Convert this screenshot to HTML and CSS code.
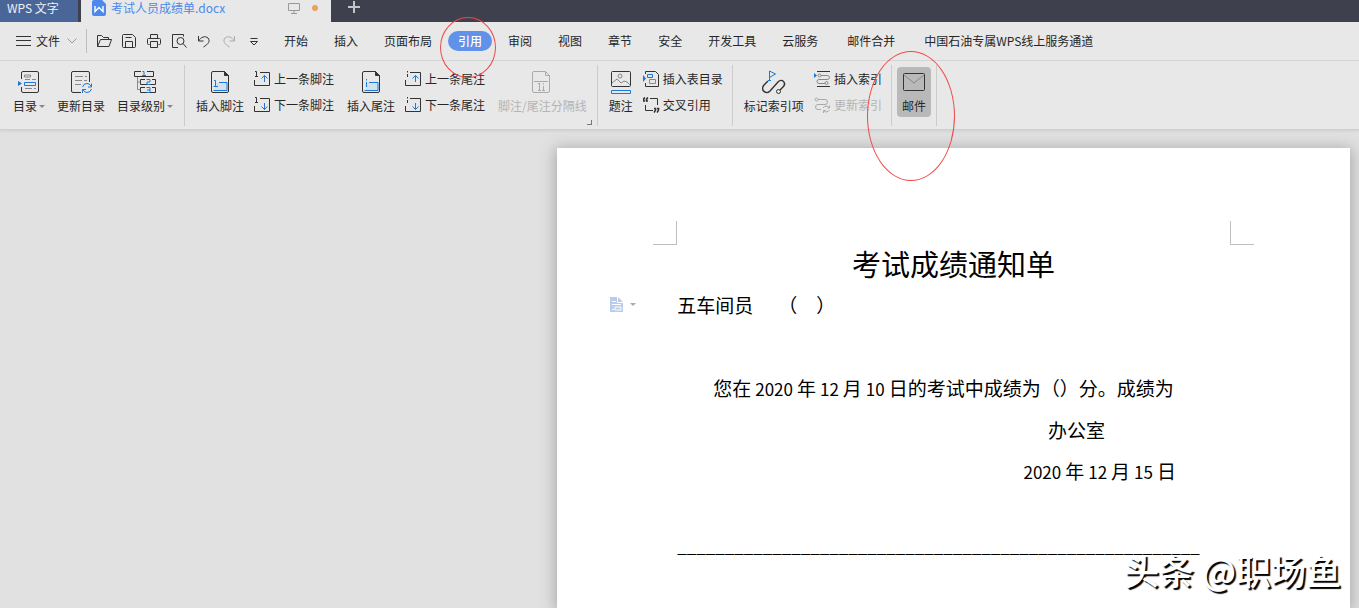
FILE: index.html
```html
<!DOCTYPE html>
<html lang="zh-CN">
<head>
<meta charset="utf-8">
<title>考试人员成绩单.docx - WPS 文字</title>
<link rel="stylesheet" href="styles.css">
</head>
<body>
<header class="titlebar">
  <button class="home" type="button">WPS 文字</button>
  <div class="doctab">
    <svg class="doclogo" width="14" height="16" viewBox="0 0 14 16"><path d="M2 0h8l4 4v10a2 2 0 0 1-2 2H2a2 2 0 0 1-2-2V2a2 2 0 0 1 2-2z" fill="#4c88ee"/><path d="M3 6v5.500l4-4 4 4V6" fill="none" stroke="#fff" stroke-width="1.400"/></svg>
    <a class="docname" href="#doc">考试人员成绩单.docx</a>
    <svg class="line muted" width="12" height="12" viewBox="0 0 12 12"><path d="M.5 1.500h11v7H.5zM6 8.500v3M3 11.500h6"/></svg>
    <span class="unsaved"></span>
  </div>
  <button class="newtab" type="button" aria-label="新建"><svg width="12" height="12" viewBox="0 0 12 12"><path d="M6 0v12M0 6h12" stroke="#c4c5ca" stroke-width="2"/></svg></button>
</header>

<nav class="menubar">
  <button class="file" type="button"><svg class="line" width="15" height="12" viewBox="0 0 15 12"><path d="M0 1.500h15M0 5.500h15M0 10.500h15"/></svg>文件<svg class="line muted chev" width="10" height="6" viewBox="0 0 10 6"><path d="M.5.500L5 5 9.500.500"/></svg></button>
  <div class="quick">
    <button type="button" aria-label="打开"><svg class="line" width="16" height="14" viewBox="0 0 16 14"><path d="M1.500 12.500v-11h4l2 2h5v2M1.500 12.500l3-7h11l-2.500 7z"/></svg></button>
    <button type="button" aria-label="保存"><svg class="line" width="16" height="14" viewBox="0 0 16 14"><path d="M2.500.500h9l3 3v9q0 1-1 1h-11q-1 0-1-1v-11q0-1 1-1zM4.500 13.500v-6h7v6M4.500 3.500h6"/></svg></button>
    <button type="button" aria-label="打印"><svg class="line" width="16" height="14" viewBox="0 0 16 14"><path d="M4.500 4.500v-4h7v4M3.500 10.500H2.500q-1 0-1-1v-4q0-1 1-1h11q1 0 1 1v4q0 1-1 1h-1M4.500 7.500h7v6h-7z"/></svg></button>
    <button type="button" aria-label="打印预览"><svg class="line" width="16" height="14" viewBox="0 0 16 14"><path d="M7 13.500H1.500V.500h11v2"/><circle cx="9.500" cy="7" r="3.500"/><path d="M12 9.500l3.500 4"/></svg></button>
    <button type="button" aria-label="撤销"><svg class="line" width="16" height="14" viewBox="0 0 16 14"><path d="M2.500 2v5h5M2.500 7C5 3 9 1.500 12 4c2.500 3 .5 6-4.500 9"/></svg></button>
    <button type="button" aria-label="恢复"><svg class="line faint" width="16" height="14" viewBox="0 0 16 14"><path d="M13.500 2v5h-5M13.500 7C11 3 7 1.500 4 4c-2.500 3-.5 6 4.500 9"/></svg></button>
    <button type="button" aria-label="更多"><svg class="line" width="16" height="14" viewBox="0 0 16 14"><path d="M4.500 4.500h7M4.500 7.500l3.500 3.500 3.500-3.500z"/></svg></button>
  </div>
  <div class="tabs">
    <button type="button">开始</button><button type="button">插入</button><button type="button">页面布局</button><button class="active" type="button"><span>引用</span></button><button type="button">审阅</button><button type="button">视图</button><button type="button">章节</button><button type="button">安全</button><button type="button">开发工具</button><button type="button">云服务</button><button class="plugin" type="button">邮件合并</button><button class="plugin" type="button">中国石油专属WPS线上服务通道</button>
  </div>
  <span class="mark mark-tab"></span>
</nav>

<section class="ribbon" aria-label="引用">
  <button class="big" type="button"><svg class="line" width="24" height="24" viewBox="0 0 24 24"><path d="M4.500 9V3q0-1.500 1.500-1.500h14q1.500 0 1.500 1.500v18q0 1.500-1.500 1.500H6q-1.500 0-1.500-1.500v-4"/><path class="g" d="M7.500 5h6v2h-6zM15 9.500h4M8 18.500h7M17 18.500h2M8 9.500h5"/><path class="b" d="M7.500 12.500h11v3h-11z"/><path d="M1 11l4 2.500L1 16z" fill="#1c78d8" stroke="none"/></svg><span class="drop">目录</span></button>
  <button class="big" type="button"><svg class="line" width="24" height="24" viewBox="0 0 24 24"><path d="M12 22.500H4q-1.500 0-1.500-1.500V3q0-1.500 1.500-1.500h15q1.500 0 1.500 1.500v9"/><path class="g" d="M6 6.500h8M16 6.500h2M6 10.500h7M15 10.500h3M6 14.500h6"/><path class="b" d="M13.500 17q1-3.500 4.500-3.500 2.500 0 4 2.500M22.500 13.500V17H19M22.500 19q-1 3.500-4.500 3.500-2.500 0-4-2.500M13.500 23v-3.500H17"/></svg>更新目录</button>
  <button class="big" type="button"><svg class="line" width="24" height="24" viewBox="0 0 24 24"><path d="M8 1.500H1.500v5h19v-5H14M12 9.500H7.500v5h15v-5H19M12 17.500H7.500v5h15v-5H19"/><path class="g" d="M4.500 7v12.500h3M4.500 12h3"/><path class="b" d="M9.500 1.500H11v4M9 5.500h4M13.500 9.500H17V12h-3v2.500h3.500M13.500 17.500H17v2.500h-3M17 20v2.500h-3.500"/></svg><span class="drop">目录级别</span></button>
  <span class="sep"></span>
  <button class="big" type="button"><svg class="line" width="24" height="24" viewBox="0 0 24 24"><path d="M7 13h13v8H7z" fill="#d3e0ee" stroke="none"/><path d="M16.500 1.500H5q-1.500 0-1.500 1.500v18q0 1.500 1.500 1.500h14q1.500 0 1.500-1.500V5.500z"/><path d="M16.500 1.500v4h4z" fill="#333"/><path class="b" d="M6 10.500h1.500v6M5.500 16.500H10M11 12.500h8v8H5.500"/></svg>插入脚注</button>
  <div class="stack">
    <button type="button"><svg class="line" width="17" height="16" viewBox="0 0 17 16"><path d="M1 .500h1.500v5M1 5.500h3M.5 9v5.500h15V1.500H6"/><path class="b" d="M10.500 11V4.500M7.500 7.500l3-3 3 3"/></svg>上一条脚注</button>
    <button type="button"><svg class="line" width="17" height="16" viewBox="0 0 17 16"><path d="M1 .500h1.500v5M1 5.500h3M.5 9v5.500h15V1.500H6"/><path class="b" d="M10.500 6v6.500M7.500 9.500l3 3 3-3"/></svg>下一条脚注</button>
  </div>
  <button class="big" type="button"><svg class="line" width="24" height="24" viewBox="0 0 24 24"><path d="M7 13h13v8H7z" fill="#d3e0ee" stroke="none"/><path d="M16.500 1.500H5q-1.500 0-1.500 1.500v18q0 1.500 1.500 1.500h14q1.500 0 1.500-1.500V5.500z"/><path d="M16.500 1.500v4h4z" fill="#333"/><path class="b" d="M7.500 9v1.500M7.500 12v5M10 12.500h9v8H5.500"/></svg>插入尾注</button>
  <div class="stack">
    <button type="button"><svg class="line" width="17" height="16" viewBox="0 0 17 16"><path d="M2.500 0v1.500M2.500 3v3M.5 9v5.500h15V1.500H5"/><path class="b" d="M10.500 11V4.500M7.500 7.500l3-3 3 3"/></svg>上一条尾注</button>
    <button type="button"><svg class="line" width="17" height="16" viewBox="0 0 17 16"><path d="M2.500 0v1.500M2.500 3v3M.5 9v5.500h15V1.500H5"/><path class="b" d="M10.500 6v6.500M7.500 9.500l3 3 3-3"/></svg>下一条尾注</button>
  </div>
  <button class="big" type="button" disabled><svg class="line faint" width="24" height="24" viewBox="0 0 24 24"><path d="M15.500 1.500H4q-1.500 0-1.500 1.500v18q0 1.500 1.500 1.500h14q1.500 0 1.500-1.500V5.500zM15.500 1.500v4h4M4 11.500h14M9.500 13v7M8 13.500h1.500M8 20.500h3M13.500 13v1.500M13.500 16v4M12 20.500h3"/></svg>脚注/尾注分隔线</button>
  <button class="launcher" type="button" aria-label="脚注和尾注设置"></button>
  <span class="sep"></span>
  <button class="big" type="button"><svg class="line" width="24" height="24" viewBox="0 0 24 24"><rect x="2.500" y="1.500" width="19" height="15" rx="1"/><path class="g" d="M3 13l5-4 4 4 3-2 3 1 3 3"/><circle class="g" cx="11" cy="6" r="2"/><path class="b" d="M2.500 20.500h19v3h-19z"/></svg>题注</button>
  <div class="stack">
    <button type="button"><svg class="line" width="17" height="16" viewBox="0 0 17 16"><path d="M2.500 3V.500h10l3 3v12h-13V12"/><path class="b" d="M4.500 3.500h5v3h-5z"/><path class="g" d="M6.500 8.500h6v4h-6z"/><path d="M0 4l3 3.500L0 11z" fill="#1c78d8" stroke="none"/></svg>插入表目录</button>
    <button type="button"><svg class="line" width="17" height="16" viewBox="0 0 17 16"><path d="M7 1.500h7.500V8M2.500 8v5.500H10"/><path stroke-width="1.600" d="M2 .500Q0 2 .5 4H2M5 .500Q3 2 3.500 4H5M11 11.500h1.500q.5 2-1.500 4M14 11.500h1.500q.5 2-1.500 4"/></svg>交叉引用</button>
  </div>
  <span class="sep"></span>
  <button class="big" type="button"><svg class="line" width="24" height="24" viewBox="0 0 24 24"><path stroke-width="1.400" d="M6 11l-4 4c-4 5 2 10 6 6l8-9c4-4 9 1 5 5l-3 3"/><circle cx="16.500" cy="21.500" r="2"/><path class="b" d="M7.500 10V1l6 3-6 3.500M6 10.500h3"/></svg>标记索引项</button>
  <div class="stack">
    <button type="button"><svg class="line" width="17" height="16" viewBox="0 0 17 16"><path d="M3 .500h13M3 15.500h13"/><path class="g" d="M7 4.500h6q2.500 0 2.500 2T13 8.500H5q-2 0-2 2t2 2h6"/><circle class="g" cx="5.500" cy="4.500" r="1.500"/><circle class="g" cx="12.500" cy="12" r="1.500"/><path d="M0 2l3 2.500L0 7z" fill="#1c78d8" stroke="none"/></svg>插入索引</button>
    <button type="button" disabled><svg class="line faint" width="17" height="16" viewBox="0 0 17 16"><circle cx="2.500" cy="2.500" r="1.500"/><path d="M4 2.500h7q2.500 0 2.500 2.500T11 7.500H4q-2.500 0-2.500 2.500t2.500 2.500h3M9 11q1-2 4-2l2 1.500M15.500 8.500v2.500h-2M15.500 13q-1 2-4 2l-1.500-1M9.500 16v-2.500h2"/></svg>更新索引</button>
  </div>
  <span class="sep"></span>
  <button class="big pressed" type="button"><svg class="line" width="24" height="24" viewBox="0 0 24 24"><rect x="1.500" y="3.500" width="21" height="17" rx="1"/><path class="g" d="M2 5l10 8L22 5"/></svg>邮件<span class="mark mark-mail"></span></button>
  <span class="sep"></span>
</section>

<main class="workspace" id="doc">
  <article class="page">
    <span class="crop crop-left"></span><span class="crop crop-right"></span>
    <h1>考试成绩通知单</h1>
    <p>五车间员<span class="blank">（&emsp;）</span>
      <button class="paratool" type="button" aria-label="段落布局"><svg width="13" height="15" viewBox="0 0 13 15"><path d="M0 0h8l5 5v10H0z" fill="#b8cdec"/><path d="M7.500 0v5.500H13M2 4.500h4M2 7.500h9M2 12.500h2M5 10h6v3H5z" fill="none" stroke="#fff"/></svg></button></p>
    <p class="indent gap">您在<span class="num">2020</span>年<span class="num">12</span>月<span class="num">10</span>日的考试中成绩为（）分。成绩为</p>
    <p class="office">办公室</p>
    <p class="date"><span class="num">2020</span>年<span class="num">12</span>月<span class="num">15</span>日</p>
    <p class="rule">_______________________________________________________</p>
  </article>
  <div class="watermark">头条 @职场鱼</div>
</main>
</body>
</html>
```

FILE: styles.css
```css
* { box-sizing: border-box; }
body {
  margin: 0;
  height: 100vh;
  display: flex;
  flex-direction: column;
  overflow: hidden;
  background: #e1e1e1;
  color: #262626;
  font: 12px/16px "Noto Sans CJK SC", sans-serif;
}
button {
  margin: 0;
  padding: 0;
  border: 0;
  background: none;
  color: inherit;
  font: inherit;
  white-space: nowrap;
}
button:disabled { color: #b4b4b4; }
svg { display: block; flex: none; }
.line { fill: none; stroke: #333; stroke-width: 1; }
.line .b { stroke: #1c78d8; }
.line .g { stroke: #888; }
.muted { stroke: #999; }
.faint { stroke: #aaa; }

.titlebar { display: flex; height: 22px; background: #3e404d; }
.home {
  width: 78px;
  padding: 0 0 6px 7px;
  background: #4a6699;
  color: #eef1f6;
  font-size: 12px;
  text-align: left;
}
.doctab {
  display: flex;
  align-items: center;
  width: 250px;
  margin-left: 3px;
  padding: 0 13px 6px 11px;
  background: #e8e8e8;
}
.docname { margin: 0 auto 0 5px; color: #4c88e8; text-decoration: none; }
.unsaved { width: 6px; height: 6px; margin-left: 12px; border-radius: 50%; background: #e9a35b; }
.newtab { padding: 0 17px 8px; }

.menubar {
  position: relative;
  display: flex;
  align-items: center;
  height: 39px;
  border-bottom: 1px solid #d4d4d4;
  background: #e8e8e8;
}
.file {
  display: flex;
  align-items: center;
  gap: 5px;
  height: 24px;
  padding: 0 9px 0 16px;
  border-right: 1px solid #bdbdbd;
}
.chev { margin-left: 2px; }
.quick { display: flex; gap: 9px; margin-left: 9px; }
.tabs { display: flex; align-items: center; margin-left: 9px; }
.tabs button { padding: 0 13px; }
.tabs .active { padding: 0 3px; }
.active span {
  display: block;
  padding: 2px 10px;
  border-radius: 10px;
  background: #5f92e8;
  color: #fff;
  font-weight: 500;
}
.tabs .plugin { margin-left: 3px; }
.mark { position: absolute; border: 1px solid #f04848; border-radius: 50%; pointer-events: none; z-index: 2; }
.mark-tab { left: 440px; top: -5px; width: 56px; height: 61px; }
.mark-mail { left: -30px; top: -16px; width: 88px; height: 130px; }

.ribbon {
  display: flex;
  align-items: flex-start;
  height: 69px;
  padding: 6px 0 0 7px;
  border-bottom: 1px solid #cfcfcf;
  background: #e8e8e8;
  box-shadow: 0 1px 3px #cccccc;
}
.big {
  display: flex;
  flex-direction: column;
  align-items: center;
  gap: 4px;
  padding: 3px 6px;
}
.drop { display: flex; align-items: center; gap: 2px; }
.drop::after { content: ""; border: 3px solid transparent; border-top-color: #888; border-bottom-width: 0; }
.sep { width: 1px; height: 61px; margin: -2px 5px 0; background: #cccccc; }
.stack { display: flex; flex-direction: column; gap: 10px; padding: 4px 4px 0; }
.stack button { display: flex; align-items: center; gap: 3px; }
.stack + .big { margin-left: 3px; }
.launcher { align-self: flex-end; width: 5px; height: 5px; margin: 0 0 4px -6px; border: solid #777; border-width: 0 1px 1px 0; }
.pressed { position: relative; padding: 3px 5px; border-radius: 4px; background: #b9b9b9; }

.workspace { position: relative; flex: 1; display: flex; padding: 18px 9px 0 41%; min-height: 0; }
.page {
  position: relative;
  flex: 1;
  padding: 95px 120px 0;
  background: #fff;
  color: #000;
  box-shadow: 0 2px 14px 2px #aaaaaa;
  font-size: 19px;
  line-height: 41px;
}
.page h1 { margin: 0; font-size: 29px; font-weight: 400; text-align: center; }
.page p { position: relative; margin: 0; white-space: nowrap; }
.page .gap { margin-top: 42px; }
.page .indent { padding-left: 36px; }
.page .office { padding-right: 125px; text-align: right; }
.page .date { padding-right: 54px; text-align: right; }
.page .rule { margin-top: 33px; font-size: 17px; }
.blank { margin-left: 25px; }
.num { margin: 0 4px; font-size: 17px; }
.crop { position: absolute; top: 73px; width: 24px; height: 24px; border: solid #c0c0c0; border-width: 0 0 1px; }
.crop-left { left: 96px; border-right-width: 1px; }
.crop-right { right: 96px; border-left-width: 1px; }
.paratool { position: absolute; left: -67px; top: 13px; display: flex; align-items: center; gap: 7px; }
.paratool::after { content: ""; border: 3px solid transparent; border-top-color: #aaa; border-bottom-width: 0; }
.watermark {
  position: absolute;
  right: 18px;
  bottom: 14px;
  color: #fff;
  font-size: 35px;
  font-weight: 500;
  line-height: 48px;
  text-shadow: 2px 2px 1px #000;
}
```
